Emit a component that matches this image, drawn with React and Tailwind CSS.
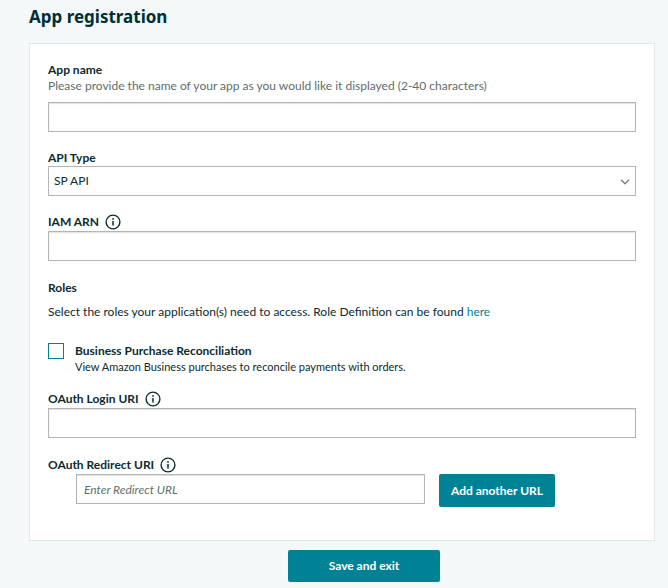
import React, { useState } from 'react';

const inputStyle =
    'block h-[30px] w-full border border-[#b1b5b5] bg-white px-[7px] text-xs text-[#0b2b30] shadow-[inset_0_1px_1px_rgba(0,0,0,0.12)] outline-none placeholder:italic placeholder:text-[#626e6e] focus:border-[#008296]';

const buttonStyle =
    'rounded-[2px] bg-[#008296] text-xs font-bold text-white hover:bg-[#006b7c]';

const InfoIcon = () => (
    <svg width="16" height="16" viewBox="0 0 16 16" fill="none" aria-hidden="true">
        <circle cx="8" cy="8" r="6.9" stroke="#0b2b30" strokeWidth="1.4" />
        <circle cx="8" cy="4.9" r="0.9" fill="#0b2b30" />
        <path d="M8 6.9V11.4" stroke="#0b2b30" strokeWidth="1.5" />
    </svg>
);

const FieldLabel = ({ htmlFor, children, info = false }) => (
    <div className="flex h-4 items-center gap-1.5">
        <label htmlFor={htmlFor} className="font-bold">
            {children}
        </label>
        {info && (
            <button type="button" aria-label={`About ${children}`}>
                <InfoIcon />
            </button>
        )}
    </div>
);

const App = () => {
    const [appName, setAppName] = useState('');
    const [apiType, setApiType] = useState('SP API');
    const [iamArn, setIamArn] = useState('');
    const [loginUri, setLoginUri] = useState('');
    const [redirectUri, setRedirectUri] = useState('');

    return (
        <main className="min-h-screen bg-[#f4f8f9] pr-[13px] pl-[29px] pt-[5px] pb-1.5 font-[Lato,sans-serif] text-xs leading-4 text-[#0b2b30]">
            <h1 className="font-['Noto_Sans',sans-serif] text-[17px] leading-6 font-bold text-[#002f36]">App registration</h1>

            <form onSubmit={(e) => e.preventDefault()}>
                <div className="mt-3.5 border border-[#e2e8e9] bg-white pt-[18px] pr-[18px] pb-[33px] pl-[18px]">

                    {/* APP NAME */}
                    <FieldLabel htmlFor="app-name">App name</FieldLabel>
                    <p id="app-name-hint" className="text-[#626c6d]">
                        Please provide the name of your app as you would like it displayed (2-40 characters)
                    </p>
                    <input
                        id="app-name"
                        type="text"
                        aria-describedby="app-name-hint"
                        value={appName}
                        onChange={(e) => setAppName(e.target.value)}
                        className={`mt-2 ${inputStyle}`}
                    />

                    {/* API TYPE */}
                    <div className="mt-[18px]">
                        <FieldLabel htmlFor="api-type">API Type</FieldLabel>
                        <div className="relative">
                            <select
                                id="api-type"
                                value={apiType}
                                onChange={(e) => setApiType(e.target.value)}
                                className="block h-[30px] w-full appearance-none border border-[#b1b5b5] bg-white pr-8 pl-[5px] text-xs outline-none focus:border-[#008296]"
                            >
                                <option>SP API</option>
                            </select>
                            <svg
                                width="10"
                                height="6"
                                viewBox="0 0 10 6"
                                fill="none"
                                aria-hidden="true"
                                className="pointer-events-none absolute top-[13px] right-1.5"
                            >
                                <path d="M1 0.8L5 4.8L9 0.8" stroke="#7a8585" strokeWidth="1.5" />
                            </svg>
                        </div>
                    </div>

                    {/* IAM ARN */}
                    <div className="mt-[18px]">
                        <FieldLabel htmlFor="iam-arn" info>IAM ARN</FieldLabel>
                        <input
                            id="iam-arn"
                            type="text"
                            value={iamArn}
                            onChange={(e) => setIamArn(e.target.value)}
                            className={`mt-px ${inputStyle}`}
                        />
                    </div>

                    {/* ROLES */}
                    <h2 className="mt-[19px] font-bold">Roles</h2>
                    <p className="mt-2">
                        Select the roles your application(s) need to access. Role Definition can be found{' '}
                        <a href="#roles" className="text-[#008296] hover:underline">here</a>
                    </p>
                    <div className="mt-[23px] flex items-start gap-[11px]">
                        <input
                            id="role-reconciliation"
                            type="checkbox"
                            aria-describedby="role-reconciliation-hint"
                            className="size-4 shrink-0 appearance-none border border-[#008296] bg-white checked:bg-[#008296]"
                        />
                        <div>
                            <label htmlFor="role-reconciliation" className="block font-bold">
                                Business Purchase Reconciliation
                            </label>
                            <p id="role-reconciliation-hint" className="text-[11px]">
                                View Amazon Business purchases to reconcile payments with orders.
                            </p>
                        </div>
                    </div>

                    {/* OAUTH */}
                    <div className="mt-4">
                        <FieldLabel htmlFor="login-uri" info>OAuth Login URI</FieldLabel>
                        <input
                            id="login-uri"
                            type="text"
                            value={loginUri}
                            onChange={(e) => setLoginUri(e.target.value)}
                            className={`mt-px ${inputStyle}`}
                        />
                    </div>
                    <div className="mt-[19px]">
                        <FieldLabel htmlFor="redirect-uri" info>OAuth Redirect URI</FieldLabel>
                        <div className="mt-px flex items-start gap-3.5 pr-[81px] pl-7">
                            <input
                                id="redirect-uri"
                                type="text"
                                placeholder="Enter Redirect URL"
                                value={redirectUri}
                                onChange={(e) => setRedirectUri(e.target.value)}
                                className={`min-w-0 flex-1 ${inputStyle}`}
                            />
                            <button type="button" className={`h-[33px] w-[116px] shrink-0 ${buttonStyle}`}>
                                Add another URL
                            </button>
                        </div>
                    </div>
                </div>

                {/* SUBMIT */}
                <div className="mt-[9px] flex justify-center pl-11">
                    <button type="submit" className={`h-8 w-[152px] ${buttonStyle}`}>
                        Save and exit
                    </button>
                </div>
            </form>
        </main>
    );
};

export default App;
